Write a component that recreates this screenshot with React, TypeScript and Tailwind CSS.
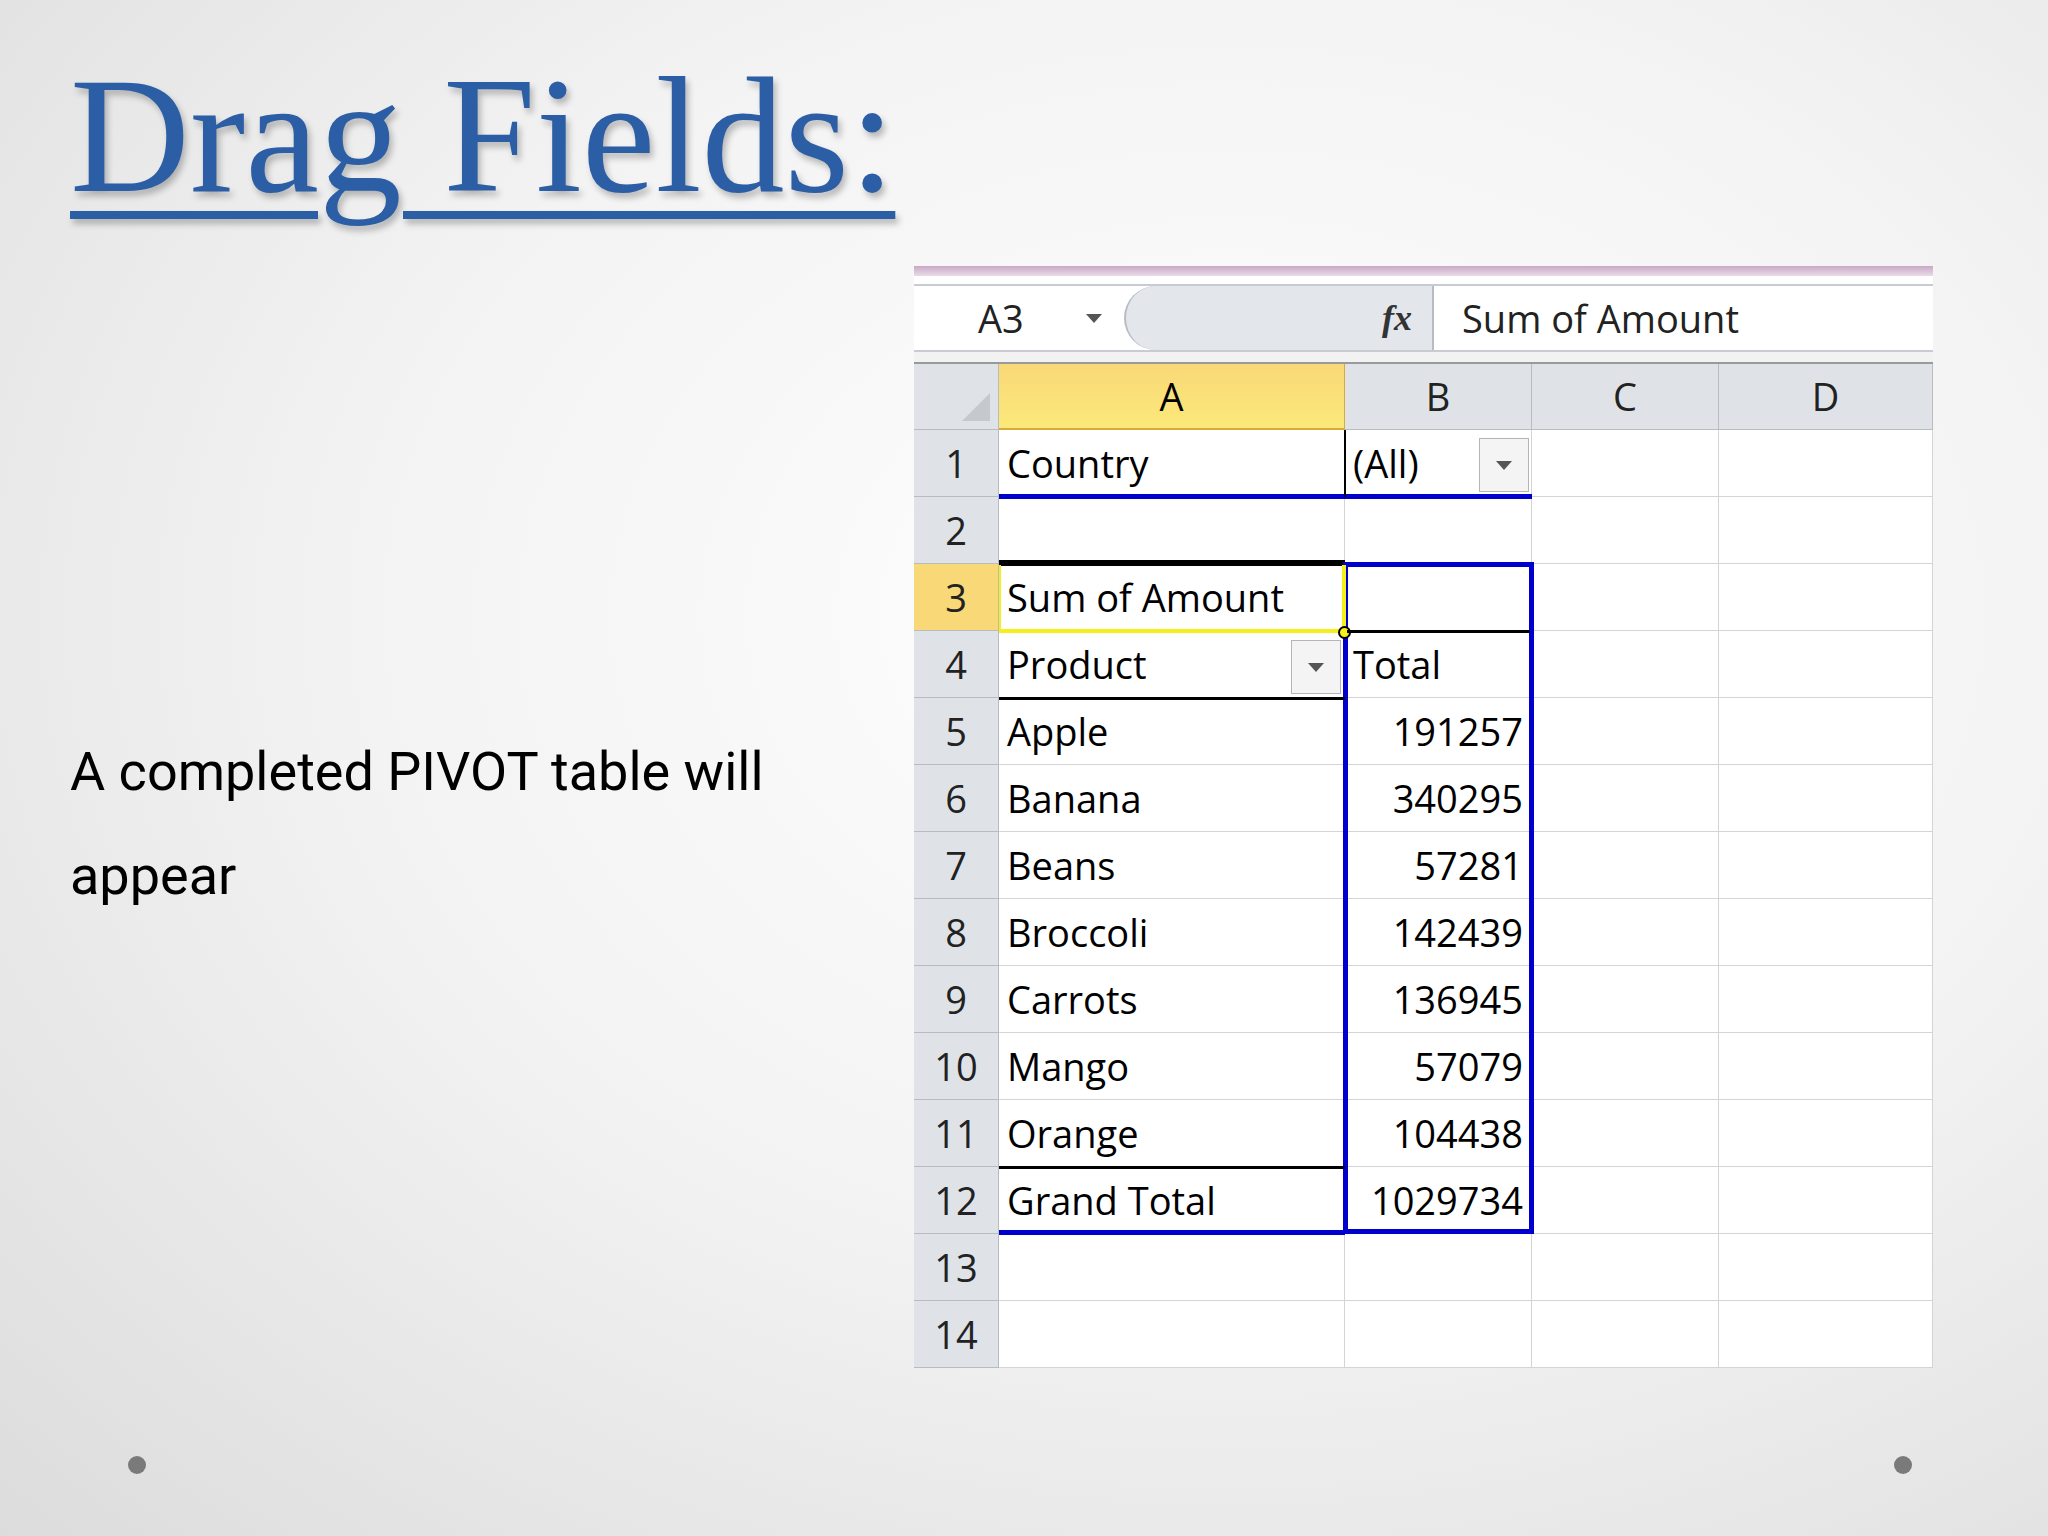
import React from "react";

const rows: [string, string, string][] = [
  ["1", "Country", "(All)"],
  ["2", "", ""],
  ["3", "Sum of Amount", ""],
  ["4", "Product", "Total"],
  ["5", "Apple", "191257"],
  ["6", "Banana", "340295"],
  ["7", "Beans", "57281"],
  ["8", "Broccoli", "142439"],
  ["9", "Carrots", "136945"],
  ["10", "Mango", "57079"],
  ["11", "Orange", "104438"],
  ["12", "Grand Total", "1029734"],
  ["13", "", ""],
  ["14", "", ""],
];

const Arrow = () => (
  <div className="w-0 h-0 border-l-[8px] border-r-[8px] border-t-[9px] border-l-transparent border-r-transparent border-t-[#555]" />
);

export default function App() {
  const cell = "border-r border-b border-[#d4d4d4] bg-white h-[67px] flex items-center text-[38px] text-black px-2 overflow-hidden whitespace-nowrap";
  return (
    <div className="w-[2048px] h-[1536px] overflow-hidden flex flex-col bg-[radial-gradient(ellipse_at_60%_40%,#ffffff_0%,#f3f3f3_50%,#dcdcdc_100%)]">
      <div className="pl-[70px] pt-[52px] h-[266px]">
        <span className="text-[#2c5ea6] text-[166px] leading-none underline decoration-[8px] underline-offset-[20px] [text-shadow:3px_5px_6px_rgba(0,0,0,0.25)]" style={{ fontFamily: '"Liberation Serif", serif' }}>
          Drag Fields:
        </span>
      </div>

      <div className="flex">
        <div className="w-[914px] pl-[70px] pt-[454px] text-[54px] leading-[104px] text-black" style={{ fontFamily: 'Roboto, "Liberation Sans", sans-serif' }}>
          A completed PIVOT table will<br />appear
        </div>

        <div className="w-[1019px]" style={{ fontFamily: '"Open Sans", "Liberation Sans", sans-serif' }}>
          <div className="h-[10px] bg-gradient-to-b from-[#c9a9c6] to-[#e9dbe8]" />
          <div className="h-[8px] bg-white" />
          <div className="flex h-[68px] bg-white border-y-2 border-[#c8ccd2] items-center text-[38px] text-[#222]">
            <div className="w-[150px] pl-[64px]">A3</div>
            <div className="w-[60px] flex justify-center"><Arrow /></div>
            <div className="w-[310px] h-full bg-[#e3e6eb] rounded-l-[40px] border-l-2 border-r-2 border-[#b8bcc2] flex items-center justify-end pr-[20px]">
              <span className="italic font-bold text-[36px] text-[#333]" style={{ fontFamily: '"Liberation Serif", serif' }}>fx</span>
            </div>
            <div className="pl-[28px]">Sum of Amount</div>
          </div>
          <div className="h-[12px] bg-[#f2f2f2] border-b-2 border-[#9a9a9a]" />

          <div className="relative grid grid-cols-[85px_346px_187px_187px_214px]">
            <div className="h-[66px] bg-[#dfe3e8] border-r border-b border-[#b8bcc2] flex items-end justify-end p-2">
              <div className="w-0 h-0" style={{ borderBottom: "28px solid #c5c9ce", borderLeft: "28px solid transparent" }} />
            </div>
            <div className="h-[66px] bg-gradient-to-b from-[#f9d877] to-[#fbe97a] border-r border-b-2 border-[#d9a93b] flex items-center justify-center text-[38px]">A</div>
            {["B", "C", "D"].map((c) => (
              <div key={c} className="h-[66px] bg-[#dfe3e8] border-r border-b border-[#b8bcc2] flex items-center justify-center text-[38px] text-[#222]">{c}</div>
            ))}
            {rows.map(([n, a, b]) => {
              const num = /^\d+$/.test(b);
              return (
                <React.Fragment key={n}>
                  <div className={`h-[67px] border-r border-b border-[#b8bcc2] flex items-center justify-center text-[38px] text-[#222] ${n === "3" ? "bg-[#f9d877]" : "bg-[#dfe3e8]"}`}>{n}</div>
                  <div className={cell}>{a}</div>
                  <div className={`${cell} ${num ? "justify-end" : ""}`}>{b}</div>
                  <div className={cell} />
                  <div className={cell} />
                </React.Fragment>
              );
            })}
            <div className="absolute left-[565px] top-[74px] w-[50px] h-[54px] bg-[#f4f4f4] border border-[#b5b5b5] flex items-center justify-center"><Arrow /></div>
            <div className="absolute left-[377px] top-[276px] w-[50px] h-[54px] bg-[#f4f4f4] border border-[#b5b5b5] flex items-center justify-center"><Arrow /></div>
            <div className="absolute left-[85px] top-[130px] w-[533px] h-[5px] bg-[#0000cc]" />
            <div className="absolute left-[430px] top-[66px] w-[2px] h-[67px] bg-black" />
            <div className="absolute left-[85px] top-[196px] w-[346px] h-[6px] bg-black" />
            <div className="absolute left-[429px] top-[198px] w-[191px] h-[672px] border-[5px] border-[#0000cc]" />
            <div className="absolute left-[85px] top-[201px] w-[347px] h-[68px] border-[4px] border-t-0 border-l-[2px] border-[#f5ef1a]" />
            <div className="absolute left-[424px] top-[262px] w-[13px] h-[13px] bg-[#f5ef1a] border-2 border-black rounded-full" />
            <div className="absolute left-[433px] top-[266px] w-[183px] h-[3px] bg-black" />
            <div className="absolute left-[85px] top-[333px] w-[346px] h-[3px] bg-black" />
            <div className="absolute left-[85px] top-[802px] w-[346px] h-[3px] bg-black" />
            <div className="absolute left-[85px] top-[866px] w-[346px] h-[5px] bg-[#0000cc]" />
          </div>
        </div>
      </div>

      <div className="flex justify-between pl-[128px] pr-[136px] mt-auto mb-[62px]">
        <div className="w-[18px] h-[18px] rounded-full bg-[#7a7a7a]" />
        <div className="w-[18px] h-[18px] rounded-full bg-[#7a7a7a]" />
      </div>
    </div>
  );
}
